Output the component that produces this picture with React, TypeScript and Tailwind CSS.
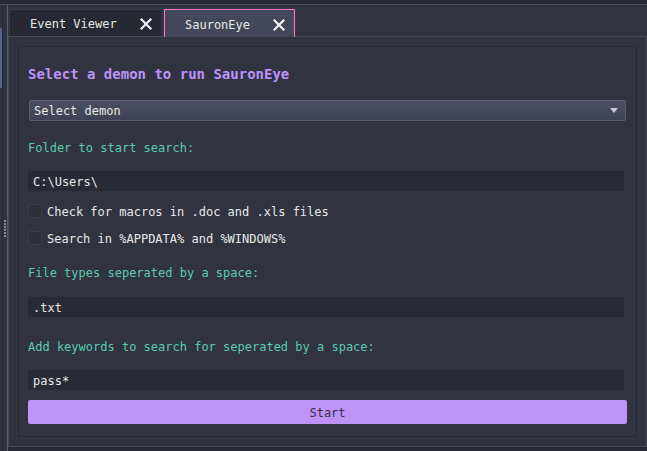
import React from "react";

const mono = { fontFamily: '"DejaVu Sans Mono", "Liberation Mono", monospace' };

const CloseIcon = () => (
  <svg width="12" height="12" viewBox="0 0 12 12" className="shrink-0">
    <path d="M1.5 1.5 L10.5 10.5 M10.5 1.5 L1.5 10.5" stroke="#f2f2f2" strokeWidth="2.2" strokeLinecap="square" />
  </svg>
);

const Label = ({ children, className = "" }: { children: React.ReactNode; className?: string }) => (
  <div className={`h-[17px] pt-px text-[12px] leading-4 text-[#5ccbb0] ${className}`}>{children}</div>
);

const TextField = ({ value, className = "" }: { value: string; className?: string }) => (
  <div className={`mr-[3px] flex h-5 items-center bg-[#282a36] px-[5px] pt-px text-[12px] text-[#e8e8e8] ${className}`}>
    {value}
  </div>
);

const Check = ({ label, className = "" }: { label: string; className?: string }) => (
  <div className={`flex h-5 items-center gap-[5px] ${className}`}>
    <div className="h-[14px] w-[14px] border border-[#3a3c4b] bg-[#2d2f3c]" />
    <span className="pt-[2px] text-[12px] text-[#e8e8e8]">{label}</span>
  </div>
);

export default function App() {
  return (
    <div className="flex h-[451px] w-[647px] flex-col overflow-hidden bg-[#313341]" style={mono}>
      {/* top strip */}
      <div className="h-[5px] shrink-0 border-b border-[#4a4c5c] bg-[#262833]" />

      <div className="flex flex-1">
        {/* left pane sliver */}
        <div className="flex w-[3px] flex-col border-r border-[#262833]">
          <div className="h-[23px]" />
          <div className="h-[60px] bg-[#56648f]" />
        </div>
        {/* splitter handle */}
        <div className="flex w-[5px] flex-col items-center justify-center gap-[1px] border-r border-[#5a5c6b]">
          {[0, 1, 2, 3, 4, 5].map((i) => (
            <div key={i} className="h-[2px] w-[2px] bg-[#8a8c99]" />
          ))}
        </div>

        {/* main area */}
        <div className="flex flex-1 flex-col">
          {/* tab bar */}
          <div className="flex h-[31px] shrink-0 items-end gap-[3px] pl-[1px]">
            <div className="flex h-[27px] w-[152px] items-center border-l border-t border-[#3a3c4a] bg-[#262833] pl-[20px] pr-[9px] pt-[2px]">
              <span className="flex-1 text-[12px] text-[#e8e8e8]">Event Viewer</span>
              <CloseIcon />
            </div>
            <div className="relative z-10 -mb-px flex h-[28px] w-[131px] items-center border border-b-0 border-[#ff79c6] bg-[#44475a] pl-[20px] pr-[9px] pt-[2px]">
              <span className="flex-1 text-[12px] text-[#e8e8e8]">SauronEye</span>
              <CloseIcon />
            </div>
          </div>

          {/* frame */}
          <div className="flex-1 border border-[#464858] bg-[#313341] p-[9px]">
            <div className="flex h-full flex-col border border-[#262833] pl-[9px] pr-[9px] pt-[18px]">
              <div className="h-[18px] text-[14px] font-bold leading-[18px] text-[#bd93f9]">
                Select a demon to run SauronEye
              </div>

              <div className="ml-px mr-px mt-[17px] flex h-[21px] items-center rounded-[2px] border border-[#5b5e70] bg-gradient-to-b from-[#4c4f62] to-[#3f4254] pl-[4px] pr-[7px]">
                <span className="flex-1 text-[12px] text-[#e8e8e8]">Select demon</span>
                <svg width="8" height="5" viewBox="0 0 8 5">
                  <path d="M0 0 L8 0 L4 5 Z" fill="#c8c9d2" />
                </svg>
              </div>

              <Label className="mt-[18px]">Folder to start search:</Label>
              <TextField value="C:\Users\" className="mt-[15px]" />

              <Check label="Check for macros in .doc and .xls files" className="mt-[10px]" />
              <Check label="Search in %APPDATA% and %WINDOWS%" className="mt-[7px]" />

              <Label className="mt-4">File types seperated by a space:</Label>
              <TextField value=".txt" className="mt-4" />

              <Label className="mt-[21px]">Add keywords to search for seperated by a space:</Label>
              <TextField value="pass*" className="mt-[15px]" />

              <button
                type="button"
                className="mt-[10px] flex h-6 items-center justify-center rounded-[2px] bg-[#bf92f8] pt-[2px] text-[12px] text-[#33343f]"
              >
                Start
              </button>
            </div>
          </div>
          <div className="h-[4px] shrink-0 bg-[#282a35]" />
        </div>
      </div>
    </div>
  );
}
